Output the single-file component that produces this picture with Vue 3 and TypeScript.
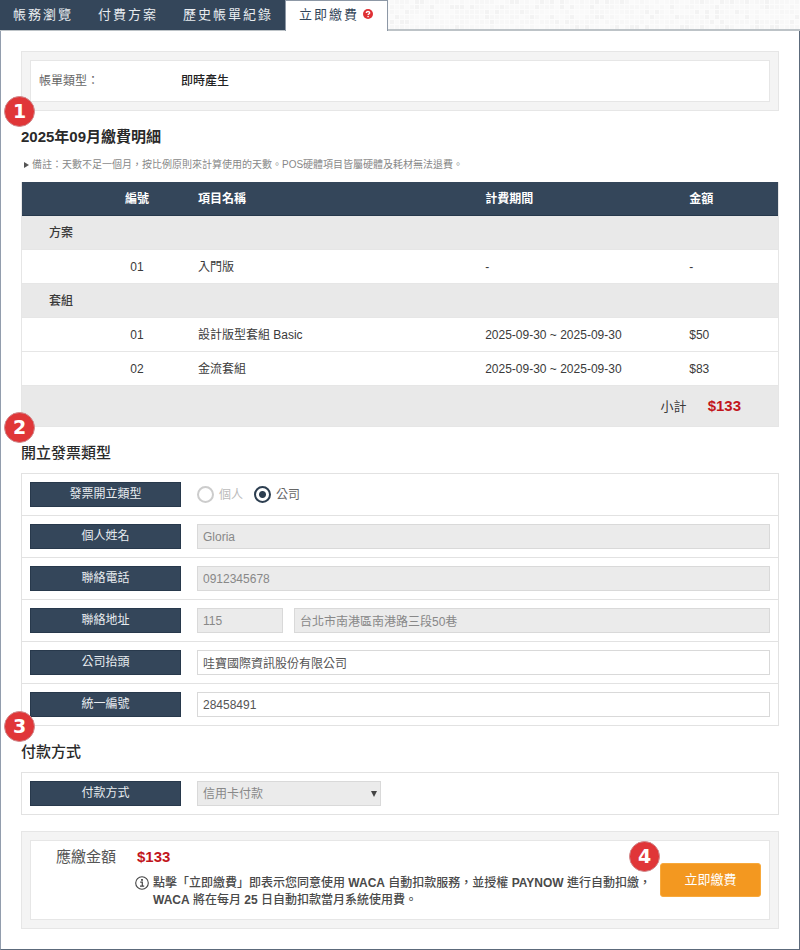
<script setup lang="ts">
import { ref } from 'vue'

interface BillItem {
  no: string
  name: string
  period: string
  amount: string
}

interface BillGroup {
  title: string
  items: BillItem[]
}

const tabs = ['帳務瀏覽', '付費方案', '歷史帳單紀錄']

const groups: BillGroup[] = [
  {
    title: '方案',
    items: [{ no: '01', name: '入門版', period: '-', amount: '-' }],
  },
  {
    title: '套組',
    items: [
      { no: '01', name: '設計版型套組 Basic', period: '2025-09-30 ~ 2025-09-30', amount: '$50' },
      { no: '02', name: '金流套組', period: '2025-09-30 ~ 2025-09-30', amount: '$83' },
    ],
  },
]

const total = '$133'
const invoiceType = ref('company')
const personName = ref('Gloria')
const phone = ref('0912345678')
const zip = ref('115')
const address = ref('台北市南港區南港路三段50巷')
const companyName = ref('哇寶國際資訊股份有限公司')
const taxId = ref('28458491')
const payment = ref('card')

// Mosaic tile behind the tab bar: each cell takes a shade from a fixed sequence.
const shades = ['#fafafa', '#f8f8f8', '#f7f7f7', '#f3f3f3', '#f9f9f9']
let seed = 17
const cells = Array.from({ length: 80 * 6 }, (_, i) => {
  seed = (seed * 1103515245 + 12345) % 2147483648
  return { x: (i % 80) * 5, y: Math.floor(i / 80) * 5, fill: shades[Math.floor(seed / 65536) % shades.length] }
})
</script>

<template>
  <div class="page">
    <nav class="tabs">
      <svg class="mosaic" aria-hidden="true">
        <defs>
          <pattern id="mosaic" width="400" height="30" patternUnits="userSpaceOnUse">
            <rect width="400" height="30" fill="#fcfcfc" />
            <rect v-for="(c, i) in cells" :key="i" :x="c.x" :y="c.y" width="4" height="4" :fill="c.fill" />
          </pattern>
        </defs>
        <rect width="100%" height="100%" fill="url(#mosaic)" />
      </svg>
      <a v-for="tab in tabs" :key="tab" class="tab" href="#">{{ tab }}</a>
      <a class="tab active" href="#" aria-current="page">
        立即繳費
        <svg class="help" viewBox="0 0 10 10" aria-hidden="true">
          <circle cx="5" cy="5" r="5" fill="#df3034" />
          <path d="M3.3 3.9C3.3 2 6.7 2 6.7 3.9C6.7 4.9 5.1 4.9 5.1 6" fill="none" stroke="#fff" stroke-width="1.3" />
          <rect x="4.4" y="6.9" width="1.4" height="1.3" fill="#fff" />
        </svg>
      </a>
    </nav>

    <main class="content">
      <div class="panel">
        <dl class="panel-inner bill-type">
          <dt>帳單類型：</dt>
          <dd>即時產生</dd>
        </dl>
      </div>

      <section>
        <h2>2025年09月繳費明細<span class="badge">1</span></h2>
        <p class="note">備註：天數不足一個月，按比例原則來計算使用的天數。POS硬體項目皆屬硬體及耗材無法退費。</p>
        <table>
          <colgroup>
            <col class="c-no" />
            <col class="c-name" />
            <col class="c-period" />
            <col />
          </colgroup>
          <thead>
            <tr>
              <th class="no">編號</th>
              <th>項目名稱</th>
              <th>計費期間</th>
              <th>金額</th>
            </tr>
          </thead>
          <tbody v-for="group in groups" :key="group.title">
            <tr class="group">
              <th colspan="4">{{ group.title }}</th>
            </tr>
            <tr v-for="item in group.items" :key="item.no">
              <td class="no">{{ item.no }}</td>
              <td>{{ item.name }}</td>
              <td>{{ item.period }}</td>
              <td>{{ item.amount }}</td>
            </tr>
          </tbody>
          <tfoot>
            <tr>
              <td colspan="4"><span class="subtotal">小計</span><strong class="price">{{ total }}</strong></td>
            </tr>
          </tfoot>
        </table>
      </section>

      <section>
        <h2>開立發票類型<span class="badge">2</span></h2>
        <div class="form">
          <div class="row">
            <span id="type-label" class="label">發票開立類型</span>
            <div class="fields" role="radiogroup" aria-labelledby="type-label">
              <label class="radio off"><input v-model="invoiceType" type="radio" name="type" value="person" disabled />個人</label>
              <label class="radio"><input v-model="invoiceType" type="radio" name="type" value="company" />公司</label>
            </div>
          </div>
          <div class="row">
            <label class="label" for="person">個人姓名</label>
            <div class="fields"><input id="person" v-model="personName" class="text" type="text" disabled /></div>
          </div>
          <div class="row">
            <label class="label" for="phone">聯絡電話</label>
            <div class="fields"><input id="phone" v-model="phone" class="text" type="text" disabled /></div>
          </div>
          <div class="row">
            <label id="address-label" class="label" for="address">聯絡地址</label>
            <div class="fields">
              <input v-model="zip" class="text zip" type="text" aria-labelledby="address-label" disabled />
              <input id="address" v-model="address" class="text" type="text" disabled />
            </div>
          </div>
          <div class="row">
            <label class="label" for="company">公司抬頭</label>
            <div class="fields"><input id="company" v-model="companyName" class="text" type="text" /></div>
          </div>
          <div class="row">
            <label class="label" for="tax">統一編號</label>
            <div class="fields"><input id="tax" v-model="taxId" class="text" type="text" /></div>
          </div>
        </div>
      </section>

      <section>
        <h2>付款方式<span class="badge">3</span></h2>
        <div class="form">
          <div class="row">
            <label class="label" for="payment">付款方式</label>
            <div class="fields">
              <div class="select">
                <select id="payment" v-model="payment" disabled>
                  <option value="card">信用卡付款</option>
                </select>
                <svg class="arrow" viewBox="0 0 6 6" aria-hidden="true"><path d="M0 0H6L3 6Z" fill="#444" /></svg>
              </div>
            </div>
          </div>
        </div>
      </section>

      <div class="panel checkout">
        <div class="panel-inner pay">
          <div class="summary">
            <p class="due"><span>應繳金額</span><strong class="price">{{ total }}</strong></p>
            <div class="terms">
              <svg class="info" viewBox="0 0 14 14" aria-hidden="true">
                <circle cx="7" cy="7" r="6.3" fill="none" stroke="#444" stroke-width="1.1" />
                <rect x="6.1" y="3" width="1.8" height="1.8" fill="#444" />
                <path d="M5.2 6.2H7.3V10M5 10.2H9.2" fill="none" stroke="#444" stroke-width="1.2" />
              </svg>
              <p>點擊「立即繳費」即表示您同意使用 <b>WACA</b> 自動扣款服務，並授權 <b>PAYNOW</b> 進行自動扣繳，<br /><b>WACA</b> 將在每月 <b>25</b> 日自動扣款當月系統使用費。</p>
            </div>
          </div>
          <div class="action">
            <span class="badge">4</span>
            <button type="button">立即繳費</button>
          </div>
        </div>
      </div>
    </main>
  </div>
</template>

<style>
body {
  margin: 0;
  background: #fff;
}
</style>

<style scoped>
* {
  box-sizing: border-box;
}

.page {
  color: #3a3a3a;
  font: 12px/16px 'Liberation Sans', 'Noto Sans CJK TC', sans-serif;
}

h2,
p,
dl,
dd {
  margin: 0;
}

.tabs {
  position: relative;
  display: flex;
  height: 31px;
  border-bottom: 2px solid #bdc3c7;
}

.mosaic {
  position: absolute;
  z-index: -1;
  width: 100%;
  height: 100%;
}

.tab {
  height: 30px;
  padding: 0 12px 0 13px;
  background: #34465a;
  color: #e8ecf0;
  font-size: 13px;
  line-height: 29px;
  letter-spacing: 2px;
  text-decoration: none;
  white-space: nowrap;
}

.tab.active {
  display: flex;
  height: 31px;
  gap: 4px;
  padding-right: 14px;
  border: 1px solid #8d98a6;
  border-bottom: 0;
  background: #fff;
  color: #34465a;
  line-height: 27px;
}

.help {
  width: 10px;
  height: 10px;
  margin-top: 8px;
}

.content {
  padding: 20px;
  border: 1px solid #5c6a7b;
  border-top: 0;
  border-left-color: #929dad;
}

.panel {
  padding: 8px;
  border: 1px solid #e6e6e6;
  background: #f4f4f4;
}

.panel-inner {
  border: 1px solid #e6e6e6;
  background: #fff;
}

.bill-type {
  display: flex;
  padding: 12px 8px;
}

.bill-type dt {
  width: 142px;
  color: #666;
}

.bill-type dd {
  color: #222;
  font-weight: 500;
}

h2 {
  position: relative;
  padding: 16px 0 10px;
  color: #2a2a2a;
  font-size: 15px;
  font-weight: bold;
  line-height: 20px;
}

section + section h2 {
  font-weight: 500;
}

.badge {
  position: absolute;
  top: -15px;
  left: -17px;
  width: 31px;
  height: 31px;
  border: 1px solid #d0898c;
  border-radius: 50%;
  background: #e03638;
  color: #fff;
  font: bold 19px/29px 'DejaVu Sans', sans-serif;
  text-align: center;
}

.note {
  display: flex;
  align-items: center;
  gap: 3px;
  padding: 1px 0 10px 3px;
  color: #888;
  font-size: 10px;
  line-height: 14px;
}

.note::before {
  content: '';
  border: solid transparent;
  border-width: 3px 0 3px 5px;
  border-left-color: #555;
}

table {
  width: 100%;
  border: 1px solid #e6e6e6;
  border-top: 0;
  border-collapse: separate;
  border-spacing: 0;
  table-layout: fixed;
}

.c-no {
  width: 23%;
}

.c-name {
  width: 38%;
}

.c-period {
  width: 27%;
}

th,
td {
  height: 34px;
  padding: 0 2px;
  border-bottom: 1px solid #e6e6e6;
  text-align: left;
}

thead th {
  border-color: #26384b;
  background: #34465a;
  color: #fff;
}

.no {
  padding-left: 58px;
  text-align: center;
}

.group th {
  padding-left: 27px;
  background: #e9e9e9;
  font-weight: 500;
}

tfoot td {
  height: 40px;
  padding-right: 37px;
  border: 0;
  background: #e9e9e9;
  text-align: right;
}

.subtotal {
  margin-right: 21px;
  font-size: 13px;
}

.price {
  color: #c2161c;
  font-size: 15px;
}

.form {
  border: 1px solid #e2e2e2;
  border-bottom: 0;
}

.row {
  display: flex;
  gap: 16px;
  padding: 8px;
  border-bottom: 1px solid #e2e2e2;
}

.label {
  flex: none;
  width: 151px;
  height: 25px;
  border: 1px solid #28394c;
  background: #34465a;
  color: #e8ecf0;
  line-height: 23px;
  text-align: center;
}

.fields {
  display: flex;
  flex: 1;
  gap: 11px;
  min-width: 0;
}

.text,
select {
  width: 100%;
  min-width: 0;
  height: 25px;
  padding: 0 5px;
  border: 1px solid #d9d9d9;
  border-radius: 0;
  background: #fff;
  color: #555;
  font: inherit;
}

.text:disabled,
select:disabled {
  background: #ebebeb;
  color: #888;
  opacity: 1;
}

.text.zip {
  flex: none;
  width: 86px;
}

.radio {
  display: flex;
  align-items: center;
  gap: 5px;
  color: #666;
}

.radio.off {
  color: #bbb;
}

.radio input {
  width: 17px;
  height: 17px;
  margin: 0;
  border: 2px solid #2c3e50;
  border-radius: 50%;
  appearance: none;
}

.radio input:checked {
  background: radial-gradient(circle, #2c3e50 3px, #fff 4px);
}

.radio input:disabled {
  border-color: #ccc;
}

.select {
  position: relative;
  width: 184px;
}

select {
  appearance: none;
}

.arrow {
  position: absolute;
  top: 10px;
  right: 4px;
  width: 6px;
  height: 6px;
}

.checkout {
  margin-top: 16px;
}

.pay {
  display: flex;
  align-items: center;
  justify-content: space-between;
  padding: 0 8px 0 25px;
}

.summary {
  padding: 6px 0 10px;
}

.due {
  display: flex;
  gap: 21px;
  font-size: 15px;
  line-height: 20px;
}

.due span {
  color: #555;
}

.terms {
  display: flex;
  gap: 4px;
  padding: 8px 0 0 79px;
  color: #4a4a4a;
  font-weight: 500;
  line-height: 17px;
  white-space: nowrap;
}

.info {
  flex: none;
  width: 14px;
  height: 14px;
  margin-top: 1px;
}

.action {
  position: relative;
}

.action .badge {
  top: -22px;
  left: -31px;
}

button {
  display: block;
  width: 101px;
  height: 34px;
  padding: 0;
  border: 1px solid #f8a93b;
  border-radius: 3px;
  background: #f39820;
  color: #fff;
  font: inherit;
  font-size: 13px;
}
</style>
